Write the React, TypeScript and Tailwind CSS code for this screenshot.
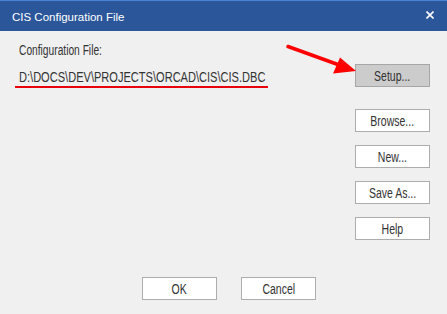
const font = { fontFamily: '"Liberation Sans", Arial, sans-serif' };

const DlgButton = ({ label, active = false }: { label: string; active?: boolean }) => (
  <div
    className={`w-[75px] h-[23px] border flex items-center justify-center overflow-hidden ${
      active ? 'bg-[#cccccc] border-[#a6a6a6]' : 'bg-white border-[#adadad]'
    }`}
  >
    <span className="inline-block text-[14px] leading-[16px] text-[#333] scale-x-[0.75] whitespace-nowrap">
      {label}
    </span>
  </div>
);

const App = () => {
  return (
    <div className="relative w-[447px] h-[314px] bg-[#f0f0f0] flex flex-col overflow-hidden" style={font}>
      {/* title bar */}
      <div className="h-[31px] bg-[#2b579a] border-t border-[#4a86d8] flex items-center justify-between pl-[12px] pr-[13px]">
        <span className="text-white text-[11.5px] leading-[14px] mt-[1px]">CIS Configuration File</span>
        <svg width="8" height="8" viewBox="0 0 8 8" className="mb-[3px]">
          <path d="M0.5 0.5L7.5 7.5M7.5 0.5L0.5 7.5" stroke="#fff" strokeWidth="1.6" />
        </svg>
      </div>

      <div className="flex">
        {/* left */}
        <div className="flex-1 pl-[19px] pt-[11px]">
          <div className="text-[14px] leading-[16px] text-[#333]">
            <span className="inline-block origin-left scale-x-[0.73] whitespace-nowrap">Configuration File:</span>
          </div>
          <div className="mt-[11px] text-[14px] leading-[16px] text-[#333]">
            <span className="inline-block origin-left scale-x-[0.79] whitespace-nowrap">
              D:\DOCS\DEV\PROJECTS\ORCAD\CIS\CIS.DBC
            </span>
          </div>
          <div className="ml-[-4px] mt-[1px] w-[253px] h-[2px] bg-[#e8000b]" />
        </div>

        {/* right buttons */}
        <div className="w-[92px] pl-0 pt-[33px] flex flex-col">
          <DlgButton label="Setup..." active />
          <div className="mt-[22px] flex flex-col gap-[13px]">
            <DlgButton label="Browse..." />
            <DlgButton label="New..." />
            <DlgButton label="Save As..." />
            <DlgButton label="Help" />
          </div>
        </div>
      </div>

      <div className="mt-[37px] pl-[142px] flex gap-[24px]">
        <DlgButton label="OK" />
        <DlgButton label="Cancel" />
      </div>

      {/* red annotation arrow */}
      <svg className="absolute left-0 top-0 pointer-events-none" width="447" height="314">
        <line x1="288" y1="46.5" x2="342" y2="66" stroke="#ff0000" strokeWidth="3.5" strokeLinecap="round" />
        <polygon points="356,71 340,57.5 333,73.5" fill="#ff0000" />
      </svg>
    </div>
  );
};

export default App;
